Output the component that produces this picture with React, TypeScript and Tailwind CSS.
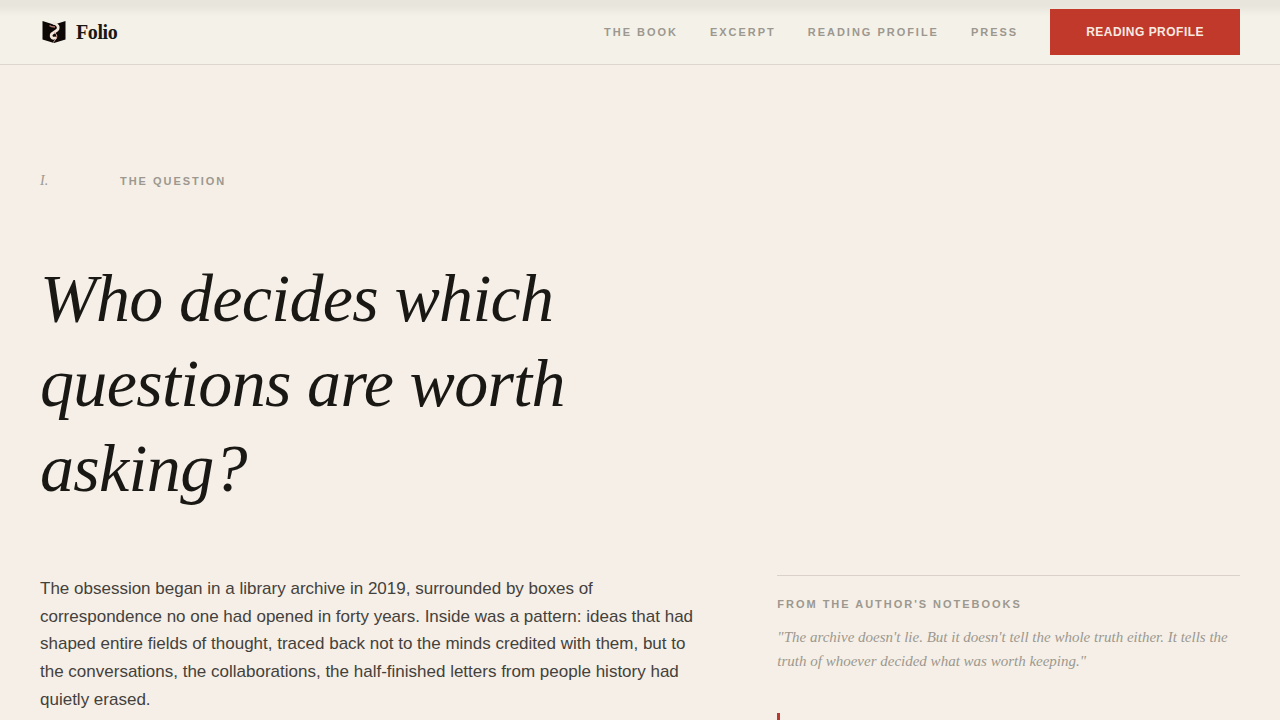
import React from 'react';

const navLinks = [
  { label: 'The Book', href: '#book' },
  { label: 'Excerpt', href: '#excerpt' },
  { label: 'Reading Profile', href: '#profile' },
  { label: 'Press', href: '#press' },
];

function LogoMark() {
  return (
    <svg viewBox="0 0 28 28" className="h-7 w-7" aria-hidden="true">
      <path d="M2.5 3 L12 6 L14 7 L16 6 L25.5 3 V21.5 L14 25 L2.5 21.5 Z" fill="#0d0706" />
      <path
        d="M14 5 C17 6.5 19 8.5 18 11 C17 13.5 12 14 11.2 17 C10.6 19.5 13 20.8 15 20"
        fill="none"
        stroke="#f5e6da"
        strokeWidth="2.8"
        strokeLinecap="round"
      />
      <path d="M14 14 C16 15.5 17.5 17.5 16.5 20 C15.8 21.8 14 22.5 13.5 24.5" fill="none" stroke="#e2b9aa" strokeWidth="1" />
      <path d="M9.5 7.5 C11 9 13 9 15 9" fill="none" stroke="#b57a6d" strokeWidth="1.3" />
    </svg>
  );
}

function Header() {
  return (
    <header className="sticky top-0 z-10 border-b border-[#ddd6ce] bg-[#f4f1e9] bg-linear-to-b from-[#e8e5dc] from-[6px] to-[#f4f1e9] to-[16px]">
      <div className="flex h-16 items-center justify-between px-10">
        <a href="#top" className="flex items-center gap-2">
          <LogoMark />
          <span className="font-['Liberation_Serif',serif] text-xl font-bold tracking-[-0.02em]">Folio</span>
        </a>
        <nav className="flex items-center gap-8">
          {navLinks.map((link) => (
            <a
              key={link.href}
              href={link.href}
              className="text-[11px] font-bold uppercase tracking-[0.18em] text-[#9c988f] transition-colors hover:text-[#1a1814]"
            >
              {link.label}
            </a>
          ))}
          <button
            type="button"
            className="bg-[#c0392b] px-9 py-[14px] text-xs leading-[18px] font-bold uppercase tracking-[0.04em] text-[#f8eae0] transition-colors hover:bg-[#a93226]"
          >
            Reading Profile
          </button>
        </nav>
      </div>
    </header>
  );
}

function Question() {
  return (
    <section id="book" className="px-10 pt-[105px] pb-24">
      <div className="mb-16 flex items-baseline leading-[22px] text-[#9c988f]">
        <span className="w-20 font-['Liberation_Serif',serif] text-sm leading-[22px] italic">I.</span>
        <span className="text-[11px] font-bold uppercase tracking-[0.18em]">The Question</span>
      </div>

      <h1 className="mb-16 max-w-[640px] font-['Liberation_Serif',serif] text-[68px] leading-[85px] italic tracking-[-0.01em]">
        Who decides which questions are worth asking?
      </h1>

      <div className="grid grid-cols-12 gap-16">
        <p className="col-span-7 text-[17px] leading-relaxed text-[#44413c]">
          The obsession began in a library archive in 2019, surrounded by boxes of correspondence no one had opened in
          forty years. Inside was a pattern: ideas that had shaped entire fields of thought, traced back not to the
          minds credited with them, but to the conversations, the collaborations, the half-finished letters from people
          history had quietly erased.
        </p>

        <aside className="col-span-5">
          <div className="border-t border-[#d9d1ca] pt-5">
            <h2 className="mb-3 text-[11px] leading-[17px] font-bold uppercase tracking-[0.18em] text-[#9c988f]">
              From the author's notebooks
            </h2>
            <p className="mb-10 font-['Liberation_Serif',serif] text-[15px] leading-6 italic text-[#9c988f]">
              "The archive doesn't lie. But it doesn't tell the whole truth either. It tells the truth of whoever
              decided what was worth keeping."
            </p>
          </div>
          <blockquote className="h-24 border-l-3 border-[#b83a2e]" />
        </aside>
      </div>
    </section>
  );
}

export default function App() {
  return (
    <div id="top" className="min-h-screen bg-[#f5efe7] font-['Liberation_Sans',sans-serif] text-[#1a1814]">
      <Header />
      <main>
        <Question />
      </main>
    </div>
  );
}
